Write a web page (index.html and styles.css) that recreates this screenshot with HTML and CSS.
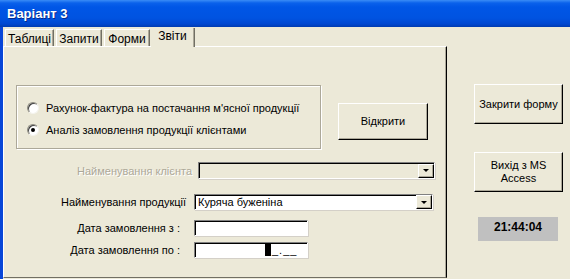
FILE: index.html
```html
<html lang="uk">
<head>
    <meta charset="UTF-8">
    <title>Варіант 3</title>
    <link rel="stylesheet" href="styles.css">
</head>
<body>
    <div class="window">
        <div class="titlebar">Варіант 3</div>
        <div class="client">
            <div class="left">
                <div class="tabs">
                    <div class="tab tab-1">Таблиці</div>
                    <div class="tab tab-2">Запити</div>
                    <div class="tab tab-3">Форми</div>
                    <div class="tab tab-4 selected">Звіти</div>
                </div>
                <div class="panel">
                    <div class="top-row">
                        <div class="frame">
                            <div class="option">
                                <span class="radio"></span>
                                <span>Рахунок-фактура на постачання м'ясної продукції</span>
                            </div>
                            <div class="option">
                                <span class="radio checked"></span>
                                <span>Аналіз замовлення продукції клієнтами</span>
                            </div>
                        </div>
                        <button class="btn btn-open">Відкрити</button>
                    </div>

                    <div class="field field-client">
                        <label class="field-label disabled">Найменування клієнта</label>
                        <div class="combo combo-client disabled">
                            <span class="combo-text"></span>
                            <span class="drop"><span class="arrow"></span></span>
                        </div>
                    </div>
                    <div class="field field-product">
                        <label class="field-label">Найменування продукції</label>
                        <div class="combo combo-product">
                            <span class="combo-text">Куряча буженіна</span>
                            <span class="drop"><span class="arrow"></span></span>
                        </div>
                    </div>
                    <div class="field field-from">
                        <label class="field-label">Дата замовлення з :</label>
                        <div class="textbox"></div>
                    </div>
                    <div class="field field-to">
                        <label class="field-label">Дата замовлення по :</label>
                        <div class="textbox"><span class="mask"><span class="caret"></span>_.__</span></div>
                    </div>
                </div>
            </div>
            <div class="side">
                <button class="btn btn-side">Закрити форму</button>
                <button class="btn btn-side btn-exit">Вихід з MS<br>Access</button>
                <div class="clock">21:44:04</div>
            </div>
        </div>
    </div>
</body>
</html>
```

FILE: styles.css
```css
/* Window */
body {
    margin: 0;
    padding: 0;
    background-color: #ece9d8;
    font-family: 'Liberation Sans', Arial, sans-serif;
    font-size: 11px;
    color: #000;
    overflow: hidden;
}
.window {
    width: 567px;
    height: 279px;
    border-left: 3px solid #0846d8;
    background-color: #ece9d8;
}
.titlebar {
    height: 27px;
    box-sizing: border-box;
    margin-left: -3px;
    padding: 6px 0 0 7px;
    background: linear-gradient(#3a8cf6 0, #0a61eb 3px, #0056e6 7px, #0053e1 18px, #0047d0 24px, #003bb0 27px);
    color: #fff;
    font-family: 'Liberation Sans', Arial, sans-serif;
    font-weight: bold;
    font-size: 13px;
    text-shadow: 1px 1px 0 #0a2a8a;
}
.client {
    display: flex;
    height: 252px;
}

/* Tabs */
.left {
    width: 444px;
    padding-top: 2px;
}
.tabs {
    display: flex;
    align-items: flex-end;
    height: 17px;
    padding-left: 2px;
}
.tab {
    box-sizing: border-box;
    height: 17px;
    margin-right: 2px;
    padding-top: 2px;
    text-align: center;
    font-size: 12px;
    border-top: 1px solid #fff;
    border-left: 1px solid #fff;
    border-right: 1px solid #716f64;
    box-shadow: inset -1px 0 #aca899;
}
.tab-1 { width: 49px; }
.tab-2 { width: 46px; }
.tab-3 { width: 46px; }
.tab-4 { width: 44px; }
.tab.selected {
    height: 19px;
    margin-left: -1px;
    padding-top: 1px;
    border-top: none;
    border-left: none;
    position: relative;
    top: 1px;
    background-color: #ece9d8;
}
.panel {
    box-sizing: border-box;
    height: 232px;
    padding: 38px 0 0 12px;
    border-top: 1px solid #fff;
    border-left: 1px solid #fff;
    border-right: 1px solid #000;
    border-bottom: 1px solid #716f64;
    box-shadow: inset -1px 0 #aca899;
}

/* Option group */
.top-row {
    display: flex;
    align-items: flex-start;
}
.frame {
    box-sizing: border-box;
    width: 305px;
    height: 64px;
    padding: 14px 0 0 10px;
    border: 1px solid #aca899;
    box-shadow: 1px 1px 0 #fff, inset 1px 1px 0 #fff;
    display: flex;
    flex-direction: column;
    gap: 6px;
}
.option {
    display: flex;
    align-items: center;
    gap: 7px;
    height: 16px;
}
.radio {
    box-sizing: border-box;
    width: 12px;
    height: 12px;
    border-radius: 50%;
    background-color: #fff;
    border: 1px solid;
    border-color: #8d8b80 #f4f3ee #f4f3ee #8d8b80;
    box-shadow: inset 1px 1px 0 #404040;
    display: flex;
    align-items: center;
    justify-content: center;
}
.radio.checked::after {
    content: "";
    width: 4px;
    height: 4px;
    border-radius: 50%;
    background-color: #000;
}

/* Buttons */
.btn {
    box-sizing: border-box;
    font-family: 'Liberation Sans', Arial, sans-serif;
    font-size: 11px;
    color: #000;
    background-color: #ece9d8;
    border: 1px solid;
    border-color: #fff #000 #000 #fff;
    box-shadow: inset -1px -1px 0 #aca899;
    padding: 0;
    line-height: 13px;
}
.btn-open {
    width: 90px;
    height: 37px;
    margin: 18px 0 0 17px;
}
.side {
    flex: 1;
    display: flex;
    flex-direction: column;
    padding: 57px 0 0 27px;
}
.btn-side {
    width: 89px;
    height: 40px;
}
.btn-exit {
    margin-top: 28px;
}
.clock {
    width: 80px;
    height: 24px;
    box-sizing: border-box;
    margin: 25px 0 0 4px;
    padding-top: 3px;
    background-color: #c0c0c0;
    text-align: center;
    font-weight: bold;
    font-size: 12px;
}

/* Fields */
.field {
    display: flex;
    align-items: center;
}
.field-client { margin-top: 13px; }
.field-product { margin-top: 15px; }
.field-from { margin-top: 10px; }
.field-to { margin-top: 6px; }
.field-label {
    box-sizing: border-box;
    width: 178px;
    text-align: right;
}
.field-client .field-label { padding-right: 2px; }
.field-product .field-label { padding-right: 8px; }
.field-from .field-label,
.field-to .field-label { padding-right: 14px; }
.field-label.disabled {
    color: #aca899;
    text-shadow: 1px 1px 0 #fff;
}
.combo, .textbox {
    box-sizing: border-box;
    height: 16px;
    background-color: #fff;
    border: 1px solid;
    border-color: #808080 #fff #fff #808080;
    box-shadow: inset 1px 1px 0 #000, 1px 1px 0 #d4d0c8;
    display: flex;
    align-items: center;
}
.combo-client {
    width: 237px;
    height: 17px;
    margin-left: 4px;
}
.combo.disabled {
    background-color: #ece9d8;
}
.combo-product {
    width: 239px;
}
.combo-text {
    flex: 1;
    padding-left: 3px;
    font-size: 11px;
}
.drop {
    box-sizing: border-box;
    width: 16px;
    height: 14px;
    background-color: #ece9d8;
    border: 1px solid;
    border-color: #fff #000 #000 #fff;
    box-shadow: inset -1px -1px 0 #aca899;
    display: flex;
    align-items: center;
    justify-content: center;
}
.arrow {
    width: 0;
    height: 0;
    border-left: 3px solid transparent;
    border-right: 3px solid transparent;
    border-top: 3px solid #000;
}
.textbox {
    width: 114px;
}
.mask {
    margin-left: 70px;
    display: flex;
    align-items: center;
    font-size: 11px;
    letter-spacing: 1px;
}
.caret {
    width: 6px;
    height: 12px;
    background-color: #000;
    margin-right: 1px;
}
```
